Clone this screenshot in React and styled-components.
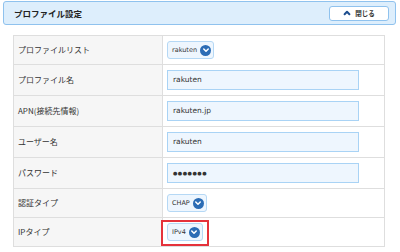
import React from "react";
import styled, { createGlobalStyle } from "styled-components";

const GlobalStyle = createGlobalStyle`
  html, body { margin: 0; padding: 0; background: #fff; }
  body { font-family: "Noto Sans CJK JP", "Noto Sans", sans-serif; color: #333; }
`;

const Page = styled.div`
  width: 400px;
  height: 252px;
  padding: 1px 4px 0 3px;
  box-sizing: border-box;
`;

const Header = styled.div`
  height: 24px;
  box-sizing: border-box;
  border: 1px solid #8fc2ee;
  border-radius: 3px;
  background: #ddeefc;
  display: flex;
  align-items: center;
  justify-content: space-between;
  padding: 0 6px 0 10px;
`;

const Title = styled.h1`
  margin: 0;
  font-size: 8.5px;
  font-weight: 700;
  color: #222;
`;

const CloseButton = styled.button`
  width: 60px;
  height: 15px;
  box-sizing: border-box;
  border: 1px solid #8fc2ee;
  border-radius: 3px;
  background: #fff;
  display: flex;
  align-items: center;
  justify-content: center;
  gap: 4px;
  padding: 0;
  font-family: inherit;
  font-size: 6.5px;
  color: #333;
  font-weight: 700;
`;

const Table = styled.table`
  margin: 10px 0 0 10px;
  width: 372px;
  border-collapse: collapse;
  table-layout: fixed;
`;

const Row = styled.tr``;

const LabelCell = styled.th`
  width: 149px;
  box-sizing: border-box;
  background: #f6f6f6;
  border: 1px solid #dedede;
  text-align: left;
  font-weight: 400;
  font-size: 8px;
  line-height: 1;
  color: #333;
  padding: 0 0 0 4px;
`;

const ValueCell = styled.td`
  border: 1px solid #dedede;
  background: #fff;
  padding: 5px 4px;
  height: ${(p) => (p.$tall ? 20 : 18)}px;
  box-sizing: content-box;
  font-size: 8px;
  line-height: 1;
`;

const Select = styled.div`
  position: relative;
  display: inline-flex;
  align-items: center;
  height: 18px;
  box-sizing: border-box;
  border: 1px solid #b5d8f5;
  border-radius: 3px;
  background: #eef6fe;
  padding: 0 2px 0 4px;
  gap: 3px;
  font-family: "DejaVu Sans", sans-serif;
  font-size: 6.5px;
  color: #333;
  vertical-align: top;
`;

const Circle = styled.span`
  width: 11px;
  height: 11px;
  border-radius: 50%;
  background: #2b6cb5;
  display: flex;
  align-items: center;
  justify-content: center;
`;

const Highlight = styled.span`
  position: absolute;
  top: -4px;
  left: -7px;
  right: -7px;
  bottom: -6px;
  border: 2px solid #e5323b;
  pointer-events: none;
`;

const Input = styled.div`
  width: 192px;
  height: 20px;
  box-sizing: border-box;
  border: 1px solid #a9d3f5;
  background: #eef6fe;
  display: flex;
  align-items: center;
  padding-left: 5px;
  font-family: "DejaVu Sans", sans-serif;
  font-size: 7.5px;
  color: #333;
`;

const Chevron = ({ up, size = 7, color = "#fff", sw = 1.6 }) => (
  <svg width={size} height={size} viewBox="0 0 10 10">
    <path
      d={up ? "M2 6.5 L5 3.5 L8 6.5" : "M2.2 3.8 L5 6.6 L7.8 3.8"}
      fill="none"
      stroke={color}
      strokeWidth={sw * (10 / size)}
      strokeLinecap="round"
      strokeLinejoin="round"
    />
  </svg>
);

const SelectField = ({ value, highlight }) => (
  <Select>
    {value}
    <Circle>
      <Chevron size={8} sw={1.5} />
    </Circle>
    {highlight && <Highlight />}
  </Select>
);

const rows = [
  { label: "プロファイルリスト", type: "select", value: "rakuten" },
  { label: "プロファイル名", type: "input", value: "rakuten" },
  { label: "APN(接続先情報)", type: "input", value: "rakuten.jp" },
  { label: "ユーザー名", type: "input", value: "rakuten" },
  { label: "パスワード", type: "input", value: "●●●●●●●", secret: true },
  { label: "認証タイプ", type: "select", value: "CHAP" },
  { label: "IPタイプ", type: "select", value: "IPv4", highlight: true },
];

const Dots = styled.span`
  font-size: 5px;
  letter-spacing: 0.5px;
`;

export default function App() {
  return (
    <>
      <GlobalStyle />
      <Page>
        <Header>
          <Title>プロファイル設定</Title>
          <CloseButton>
            <Chevron up size={8} color="#1f4f8f" sw={2} />
            閉じる
          </CloseButton>
        </Header>
        <Table>
          <tbody>
            {rows.map((r) => (
              <Row key={r.label}>
                <LabelCell>{r.label}</LabelCell>
                <ValueCell $tall={r.type === "input"}>
                  {r.type === "select" ? (
                    <SelectField value={r.value} highlight={r.highlight} />
                  ) : (
                    <Input>{r.secret ? <Dots>{r.value}</Dots> : r.value}</Input>
                  )}
                </ValueCell>
              </Row>
            ))}
          </tbody>
        </Table>
      </Page>
    </>
  );
}
